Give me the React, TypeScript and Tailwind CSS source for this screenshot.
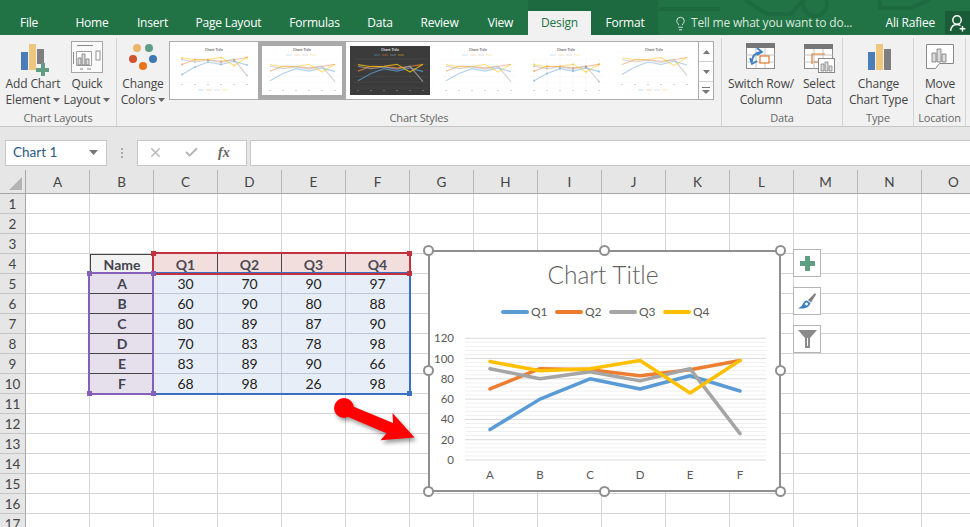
import { Lightbulb, X, Check } from 'lucide-react';

const tabs = [
  { label: 'Home', width: 'w-[62px]' },
  { label: 'Insert', width: 'w-[59px]' },
  { label: 'Page Layout', width: 'w-[93px]' },
  { label: 'Formulas', width: 'w-[79px]' },
  { label: 'Data', width: 'w-[52px]' },
  { label: 'Review', width: 'w-[67px]' },
  { label: 'View', width: 'w-[55px]' },
];
const colNames = ['A', 'B', 'C', 'D', 'E', 'F', 'G', 'H', 'I', 'J', 'K', 'L', 'M', 'N', 'O'];
const rowNums = Array.from({ length: 17 }, (_, i) => i + 1);

const tableRows: Record<number, string[]> = {
  4: ['Name', 'Q1', 'Q2', 'Q3', 'Q4'],
  5: ['A', '30', '70', '90', '97'],
  6: ['B', '60', '90', '80', '88'],
  7: ['C', '80', '89', '87', '90'],
  8: ['D', '70', '83', '78', '98'],
  9: ['E', '83', '89', '90', '66'],
  10: ['F', '68', '98', '26', '98'],
};

const series = [
  { name: 'Q1', color: '#5b9bd5', chip: 'bg-[#5b9bd5]', values: [30, 60, 80, 70, 83, 68] },
  { name: 'Q2', color: '#ed7d31', chip: 'bg-[#ed7d31]', values: [70, 90, 89, 83, 89, 98] },
  { name: 'Q3', color: '#a5a5a5', chip: 'bg-[#a5a5a5]', values: [90, 80, 87, 78, 90, 26] },
  { name: 'Q4', color: '#ffc000', chip: 'bg-[#ffc000]', values: [97, 88, 90, 98, 66, 98] },
];

const catX = [490, 540, 590, 640, 690, 740];
const valY = (v: number) => 460 - v * 1.0146;

function Caret() {
  return (
    <svg width="7" height="4" viewBox="0 0 7 4" className="inline-block ml-[3px] mb-[2px]">
      <path d="M0 0h7L3.5 4z" fill="#666" />
    </svg>
  );
}

function RibbonButton({ box, lines, caret, width, children }: { box: string; lines: string[]; caret?: boolean; width: string; children: React.ReactNode }) {
  return (
    <div className={`${width} flex flex-col items-center shrink-0`}>
      <svg width="40" height="38" viewBox={box} className="shrink-0">
        {children}
      </svg>
      <div className="text-center text-[12px] tracking-[-0.15px] leading-[16px] text-[#444] whitespace-nowrap">
        <div>{lines[0]}</div>
        <div>
          {lines[1]}
          {caret && <Caret />}
        </div>
      </div>
    </div>
  );
}

function Group({ label, width, children }: { label: string; width: string; children: React.ReactNode }) {
  return (
    <div className={`${width} shrink-0 h-[88px] flex flex-col border-r border-[#d4d4d4]`}>
      <div className="h-[74px] flex items-start">{children}</div>
      <div className="text-center text-[11px] tracking-[-0.15px] leading-[16px] text-[#666] whitespace-nowrap">{label}</div>
    </div>
  );
}

function Thumb({ dark, legendBottom, markers, grid }: { dark?: boolean; legendBottom?: boolean; markers?: boolean; grid?: boolean }) {
  const x = [8, 21, 34, 47, 60, 73];
  const top = legendBottom ? 6 : 13;
  const h = legendBottom ? 30 : 29;
  const y = (v: number) => top + h - (v / 120) * h;
  const opacity = dark ? 0.75 : 0.45;
  return (
    <svg width="80" height="49" viewBox="0 0 80 49" className={dark ? 'bg-[#3b3b3b]' : 'bg-white'}>
      <text x="40" y="5" textAnchor="middle" fontSize="3.4" fontWeight="700" fill={dark ? '#ddd' : '#777'} fontFamily="Open Sans">
        Chart Title
      </text>
      {grid &&
        x.map((gx) => <line key={gx} x1={gx} x2={gx} y1={top} y2={top + h} stroke="#eee" strokeWidth="0.5" />)}
      {[0, 1, 2, 3, 4, 5].map((i) => (
        <line key={i} x1="4" x2="77" y1={top + (i * h) / 5} y2={top + (i * h) / 5} stroke={dark ? '#555' : '#f2f2f2'} strokeWidth="0.4" />
      ))}
      {series.map((s) => (
        <g key={s.name}>
          <polyline
            points={s.values.map((v, i) => `${x[i]},${y(v)}`).join(' ')}
            fill="none"
            stroke={s.color}
            strokeWidth="1.2"
            opacity={opacity}
          />
          {markers && s.values.map((v, i) => <circle key={i} cx={x[i]} cy={y(v)} r="1.1" fill={s.color} opacity={opacity} />)}
        </g>
      ))}
      {series.map((s, i) => (
        <line
          key={s.name}
          x1={24 + i * 8}
          x2={30 + i * 8}
          y1={legendBottom ? 44 : 9}
          y2={legendBottom ? 44 : 9}
          stroke={s.color}
          strokeWidth="0.7"
          opacity={opacity}
        />
      ))}
      {x.map((gx) => (
        <rect key={gx} x={gx - 0.5} y={legendBottom ? 38 : 44} width="1" height="1" fill={dark ? '#999' : '#aaa'} />
      ))}
    </svg>
  );
}

function Cell({ row, col }: { row: number; col: number }) {
  const data = tableRows[row];
  const idx = col - 1;
  if (!data || idx < 0 || idx > 4) {
    return <div className="border-r border-b border-[#d4d4d4]" />;
  }
  const text = data[idx];
  let cls = 'border-r border-b border-[#bcc6d4] bg-[#e8eef8] text-[#222]';
  if (row === 4 && idx === 0) cls = 'border-l border-t border-r border-[#444] bg-[#f2f2f2] font-bold text-[#44424f]';
  else if (row === 4) cls = 'border-r border-[#444] bg-[#f2dedd] font-bold text-[#4b4b55]';
  else if (idx === 0) cls = 'border-b border-[#444] bg-[#e5e0ec] font-bold text-[#44424f]';
  return <div className={`flex items-center justify-center text-[14px] ${cls}`}>{text}</div>;
}

function SelHandle({ cls }: { cls: string }) {
  return <div className={`absolute w-[5px] h-[5px] ${cls}`} />;
}

function ChartHandle({ cls }: { cls: string }) {
  return <div className={`absolute w-[11px] h-[11px] rounded-full bg-white border-2 border-[#8f8f8f] ${cls}`} />;
}

export default function App() {
  const minor = Array.from({ length: 31 }, (_, i) => i * 4);

  return (
    <div className="relative w-[970px] h-[527px] overflow-hidden bg-white flex flex-col font-['Open_Sans',sans-serif]">
      {/* title / tabs */}
      <div className="relative h-[35px] bg-[#217346] flex items-end shrink-0 text-[12px] tracking-[-0.2px] text-white">
        <svg width="970" height="35" viewBox="0 0 970 35" className="absolute left-0 top-0">
          <rect x="528" y="0" width="130" height="35" fill="#1d6a40" />
          <g fill="none" stroke="#1d6a40" strokeWidth="4">
            <path d="M745 0l22 14h24l12-14" />
            <circle cx="815" cy="4" r="12" />
            <path d="M880 0v8h30l20-8M650 9h70" />
          </g>
        </svg>
        <div className="relative w-[61px] h-[24px] flex items-center justify-center pr-[3px]">File</div>
        {tabs.map((t) => (
          <div key={t.label} className={`relative h-[24px] flex items-center justify-center whitespace-nowrap ${t.width}`}>
            {t.label}
          </div>
        ))}
        <div className="relative h-[24px] w-[63px] flex items-center justify-center bg-[#f1f1f1] text-[#217346]">Design</div>
        <div className="relative h-[24px] w-[68px] flex items-center justify-center">Format</div>
        <div className="relative h-[24px] flex items-center ml-[14px] text-[#d9e8df] whitespace-nowrap">
          <Lightbulb size={15} strokeWidth={1.5} className="mr-[3px]" />
          Tell me what you want to do...
        </div>
        <div className="relative h-[24px] flex items-center ml-auto mr-[10px] whitespace-nowrap">Ali Rafiee</div>
        <div className="relative h-[23px] w-[25px] mb-[1px] bg-[#1a5c38] flex items-center justify-center">
          <svg width="18" height="18" viewBox="0 0 18 18" fill="none" stroke="#fff" strokeWidth="1.4">
            <circle cx="8" cy="6" r="4.2" />
            <path d="M1.5 17c.5-4 3-6.5 6.5-6.5 1.500 0 2.500.4 3.500 1M13.500 12v5.500M10.700 14.700h5.600" />
          </svg>
        </div>
      </div>

      {/* ribbon */}
      <div className="h-[92px] shrink-0 bg-[#f1f1f1] border-b border-[#c6c6c6] flex items-start pt-[3px]">
        <Group label="Chart Layouts" width="w-[117px]">
          <div className="w-[6px]" />
          <RibbonButton width="w-[54px]" box="13 38 40 38" lines={['Add Chart', 'Element']} caret>
            <rect x="21" y="52" width="7" height="18" fill="#4a7ebb" />
            <rect x="29" y="44" width="7" height="26" fill="#eec77f" />
            <rect x="37" y="49" width="7" height="15" fill="#7f7f7f" />
            <path d="M41 63h4v5h4v4h-4v5h-4v-5h-5v-4h5z" fill="#5f9e85" />
          </RibbonButton>
          <RibbonButton width="w-[54px]" box="67 38 40 38" lines={['Quick', 'Layout']} caret>
            <rect x="71.500" y="41.500" width="31" height="31" fill="#fafafa" stroke="#a6a6a6" />
            <path d="M77 45.500h16M73.500 52v12M80 69h3M87 69h4" stroke="#888" strokeWidth="1" />
            <path d="M76.500 65.500v-14h15v14z" fill="#fff" stroke="#888" strokeWidth="0.8" />
            <path d="M78 65v-7h3v7zM82 65v-11h3v11zM86 65v-6h3v6z" fill="#ddd" stroke="#777" strokeWidth="0.8" />
            <rect x="96" y="51" width="4" height="9" fill="#fff" stroke="#777" strokeWidth="0.8" />
          </RibbonButton>
        </Group>

        <Group label="Chart Styles" width="w-[605px]">
          <RibbonButton width="w-[52px]" box="124 38 40 38" lines={['Change', 'Colors']} caret>
            <circle cx="138" cy="48" r="4" fill="#eab56a" />
            <circle cx="150" cy="48" r="4" fill="#5f9e85" />
            <circle cx="134" cy="59" r="4" fill="#d0532f" />
            <circle cx="154" cy="59" r="4" fill="#3f76b5" />
            <circle cx="144" cy="66" r="4" fill="#e8751a" />
          </RibbonButton>
          <div className="mt-[3px] w-[545px] h-[59px] bg-white border border-[#ababab] flex">
            <div className="w-[88px] h-[57px] p-[4px]">
              <Thumb legendBottom markers />
            </div>
            <div className="w-[88px] h-[57px] bg-[#a9a9a9] p-[4px]">
              <Thumb />
            </div>
            <div className="w-[88px] h-[57px] p-[4px]">
              <Thumb dark />
            </div>
            <div className="w-[88px] h-[57px] p-[4px]">
              <Thumb />
            </div>
            <div className="w-[88px] h-[57px] p-[4px]">
              <Thumb markers grid />
            </div>
            <div className="w-[88px] h-[57px] p-[4px]">
              <Thumb legendBottom />
            </div>
            <div className="flex-1 border-l border-[#ababab] flex flex-col">
              <div className="h-[20px] border-b border-[#d0d0d0] flex items-center justify-center">
                <svg width="7" height="4" viewBox="0 0 7 4">
                  <path d="M0 4h7L3.500 0z" fill="#777" />
                </svg>
              </div>
              <div className="h-[20px] border-b border-[#d0d0d0] flex items-center justify-center">
                <svg width="7" height="4" viewBox="0 0 7 4">
                  <path d="M0 0h7L3.500 4z" fill="#777" />
                </svg>
              </div>
              <div className="flex-1 flex items-center justify-center">
                <svg width="8" height="7" viewBox="0 0 8 7">
                  <path d="M0 0h8v1H0zM0 3h8L4 7z" fill="#777" />
                </svg>
              </div>
            </div>
          </div>
        </Group>

        <Group label="Data" width="w-[121px]">
          <div className="w-[3px]" />
          <RibbonButton width="w-[72px]" box="741 38 40 38" lines={['Switch Row/', 'Column']}>
            <rect x="746.500" y="43.500" width="28" height="25" fill="#fff" stroke="#8a8a8a" />
            <rect x="746" y="43" width="29" height="5" fill="#767676" />
            <path d="M746 55h29M746 62h29M756 48v20M765 48v20" stroke="#b5b5b5" strokeWidth="0.8" />
            <rect x="760" y="56" width="9" height="7" fill="#fff" stroke="#e07a2a" strokeWidth="1.2" />
            <path d="M752 62c0-6 3-9 9-10M757 48l5 4-5 3M750 58l2 6 5-3" fill="none" stroke="#3f7fc1" strokeWidth="1.800" />
          </RibbonButton>
          <RibbonButton width="w-[44px]" box="798 38 40 38" lines={['Select', 'Data']}>
            <rect x="803.500" y="44.500" width="28" height="24" fill="#fff" stroke="#8a8a8a" />
            <rect x="803" y="44" width="29" height="5" fill="#767676" />
            <path d="M803 55h29M803 62h29M813 49v20M822 49v20" stroke="#b5b5b5" strokeWidth="0.8" />
            <path d="M811 64V54h13M813 62h6" fill="none" stroke="#e07a2a" strokeWidth="1.200" />
            <rect x="817.500" y="58.500" width="16" height="14" fill="#fff" stroke="#888" />
            <path d="M820 71v-7h3v7zM824 71v-9h3v9zM828 71v-5h3v5z" fill="#ddd" stroke="#777" strokeWidth="0.7" />
          </RibbonButton>
        </Group>

        <Group label="Type" width="w-[71px]">
          <RibbonButton width="w-[71px]" box="858 38 40 38" lines={['Change', 'Chart Type']}>
            <rect x="867" y="52" width="7" height="18" fill="#4a7ebb" />
            <rect x="875" y="44" width="7" height="26" fill="#eec77f" />
            <rect x="883" y="49" width="7" height="21" fill="#7f7f7f" />
          </RibbonButton>
        </Group>

        <Group label="Location" width="w-[52px]">
          <RibbonButton width="w-[52px]" box="920 38 40 38" lines={['Move', 'Chart']}>
            <path d="M926.500 44.500h27v19h-14l-4 5h-9z" fill="#fff" stroke="#8a8a8a" />
            <path d="M932 62v-9h4v9zM937 62V49h4v13zM942 62v-8h4v8z" fill="#ddd" stroke="#777" strokeWidth="0.8" />
          </RibbonButton>
        </Group>
      </div>

      {/* formula bar */}
      <div className="h-[43px] shrink-0 bg-[#e6e6e6] flex items-center pl-[5px] pt-[8px]">
        <div className="w-[102px] h-[26px] bg-white border border-[#c6c6c6] flex items-center justify-between pl-[7px] pr-[8px] text-[13.5px] font-['Lato'] text-[#2a5a80]">
          Chart 1
          <svg width="9" height="5" viewBox="0 0 9 5">
            <path d="M0 0h9L4.500 5z" fill="#777" />
          </svg>
        </div>
        <div className="w-[30px] flex flex-col items-center gap-[2px]">
          <div className="w-[2px] h-[2px] bg-[#aaa]" />
          <div className="w-[2px] h-[2px] bg-[#aaa]" />
          <div className="w-[2px] h-[2px] bg-[#aaa]" />
        </div>
        <div className="w-[110px] h-[26px] bg-white border border-[#c6c6c6] flex items-center text-[#b5b5b5]">
          <X size={15} strokeWidth={2.2} className="ml-[10px]" />
          <Check size={15} strokeWidth={3} className="ml-[21px]" />
          <span className="ml-[19px] text-[14px] font-bold italic text-[#666] font-['Liberation_Serif']">fx</span>
        </div>
        <div className="ml-[3px] flex-1 h-[26px] bg-white border border-[#c6c6c6] border-r-0" />
      </div>

      {/* sheet */}
      <div className="relative flex-1 font-['Lato',sans-serif] overflow-hidden">
        <div className="grid grid-cols-[26px_repeat(15,64px)] grid-rows-[24px_repeat(17,20px)] w-[986px]">
          <div className="relative bg-[#e6e6e6] border-b border-r border-[#a6a6a6]">
            <svg width="13" height="13" viewBox="0 0 13 13" className="absolute left-[9px] top-[7px]">
              <path d="M13 0v13H0z" fill="#b4b4b4" />
            </svg>
          </div>
          {colNames.map((c) => (
            <div
              key={c}
              className="bg-[#e6e6e6] border-b border-b-[#a6a6a6] border-r border-r-[#b8b8b8] flex items-center justify-center pt-[2px] text-[13.5px] text-[#444]"
            >
              {c}
            </div>
          ))}
          {rowNums.map((r) => [
            <div
              key={`h${r}`}
              className="bg-[#e6e6e6] border-r border-r-[#a6a6a6] border-b border-b-[#c4c4c4] flex items-center justify-center pt-[1px] text-[13.5px] text-[#444]"
            >
              {r}
            </div>,
            ...colNames.map((_, c) => <Cell key={`${r}-${c}`} row={r} col={c} />),
          ])}
        </div>

        {/* range selections */}
        <div className="absolute left-[152px] top-[102px] w-[259px] h-[123px] border-2 border-[#3a6fc4]" />
        <div className="absolute left-[88px] top-[102px] w-[66px] h-[123px] border-2 border-[#8560b8]" />
        <div className="absolute left-[152px] top-[82px] w-[259px] h-[23px] border-2 border-[#c0323f]" />
        <SelHandle cls="left-[151px] top-[81px] bg-[#c0323f]" />
        <SelHandle cls="left-[407px] top-[81px] bg-[#c0323f]" />
        <SelHandle cls="left-[407px] top-[101px] bg-[#c0323f]" />
        <SelHandle cls="left-[87px] top-[101px] bg-[#8560b8]" />
        <SelHandle cls="left-[151px] top-[101px] bg-[#8560b8]" />
        <SelHandle cls="left-[87px] top-[221px] bg-[#8560b8]" />
        <SelHandle cls="left-[151px] top-[221px] bg-[#8560b8]" />
        <SelHandle cls="left-[407px] top-[221px] bg-[#3a6fc4]" />

        {/* arrow */}
        <svg width="100" height="65" viewBox="325 390 100 65" className="absolute left-[325px] top-[220px] drop-shadow-[2px_3px_2px_rgba(0,0,0,0.4)]">
          <circle cx="344" cy="408" r="10" fill="#fe0000" />
          <path d="M352 406l41 17-0.500-10 22 24.500-34 2.700 6-7-40-17z" fill="#fe0000" />
        </svg>

        {/* chart */}
        <div className="absolute left-[428px] top-[80px] w-[353px] h-[242px] bg-white border-2 border-[#8f8f8f] flex flex-col items-center text-[#595959]">
          <div className="mt-[6px] -ml-[3px] h-[34px] text-[24.5px] leading-[34px] font-light text-[#5f5f5f]">Chart Title</div>
          <div className="mt-[12px] ml-[3px] flex items-center h-[16px] gap-[6px] text-[12px]">
            {series.map((s) => (
              <div key={s.name} className="flex items-center gap-[2px]">
                <div className={`w-[28px] h-[4px] rounded-full ${s.chip}`} />
                <span className="w-[18px]">{s.name}</span>
              </div>
            ))}
          </div>
          <svg width="349" height="163" viewBox="430 327 349 163" className="mt-[7px] shrink-0">
            {minor.map((v) => (
              <line
                key={v}
                x1="465"
                x2="766"
                y1={valY(v)}
                y2={valY(v)}
                stroke={v % 20 === 0 ? '#d9d9d9' : '#f0f0f0'}
                strokeWidth="1"
              />
            ))}
            {[0, 20, 40, 60, 80, 100, 120].map((v) => (
              <text key={v} x="454" y={valY(v) + 4} textAnchor="end" fontSize="11.5" fill="#595959" fontFamily="Lato">
                {v}
              </text>
            ))}
            {series.map((s) => (
              <polyline
                key={s.name}
                points={s.values.map((v, i) => `${catX[i]},${valY(v)}`).join(' ')}
                fill="none"
                stroke={s.color}
                strokeWidth="3.500"
                strokeLinecap="round"
                strokeLinejoin="round"
              />
            ))}
            {['A', 'B', 'C', 'D', 'E', 'F'].map((c, i) => (
              <text key={c} x={catX[i]} y="479" textAnchor="middle" fontSize="11.5" fill="#595959" fontFamily="Lato">
                {c}
              </text>
            ))}
          </svg>
          <ChartHandle cls="-left-[7px] -top-[7px]" />
          <ChartHandle cls="left-[169px] -top-[7px]" />
          <ChartHandle cls="-right-[7px] -top-[7px]" />
          <ChartHandle cls="-left-[7px] top-[113px]" />
          <ChartHandle cls="-right-[7px] top-[113px]" />
          <ChartHandle cls="-left-[7px] -bottom-[7px]" />
          <ChartHandle cls="left-[169px] -bottom-[7px]" />
          <ChartHandle cls="-right-[7px] -bottom-[7px]" />
        </div>

        {/* chart side buttons */}
        <div className="absolute left-[793px] top-[79px] flex flex-col gap-[10px]">
          <div className="w-[28px] h-[28px] bg-white border border-[#b5b5b5] flex items-center justify-center">
            <svg width="15" height="15" viewBox="0 0 15 15">
              <path d="M5 0h5v5h5v5h-5v5H5v-5H0V5h5z" fill="#5f9e85" />
            </svg>
          </div>
          <div className="w-[28px] h-[28px] bg-white border border-[#b5b5b5] flex items-center justify-center">
            <svg width="19" height="18" viewBox="0 0 19 18">
              <path d="M10 8L17 1l1 1.500-5 8z" fill="#7f7f7f" />
              <path d="M9 8.500l3.500 2.500c-1 3-3 5-7 5.500H0c3-1.500 4-3 5-5 1-2 2.500-3 4-3z" fill="#3f7fc1" />
              <circle cx="8.500" cy="12" r="2" fill="#fff" stroke="#3f7fc1" />
            </svg>
          </div>
          <div className="w-[28px] h-[28px] bg-white border border-[#b5b5b5] flex items-center justify-center">
            <svg width="19" height="18" viewBox="0 0 19 18">
              <path d="M0 0h19l-7 8v10H7V8z" fill="#8a8a8a" />
              <path d="M9 8h1v8H9z" fill="#fff" />
            </svg>
          </div>
        </div>
      </div>
    </div>
  );
}
